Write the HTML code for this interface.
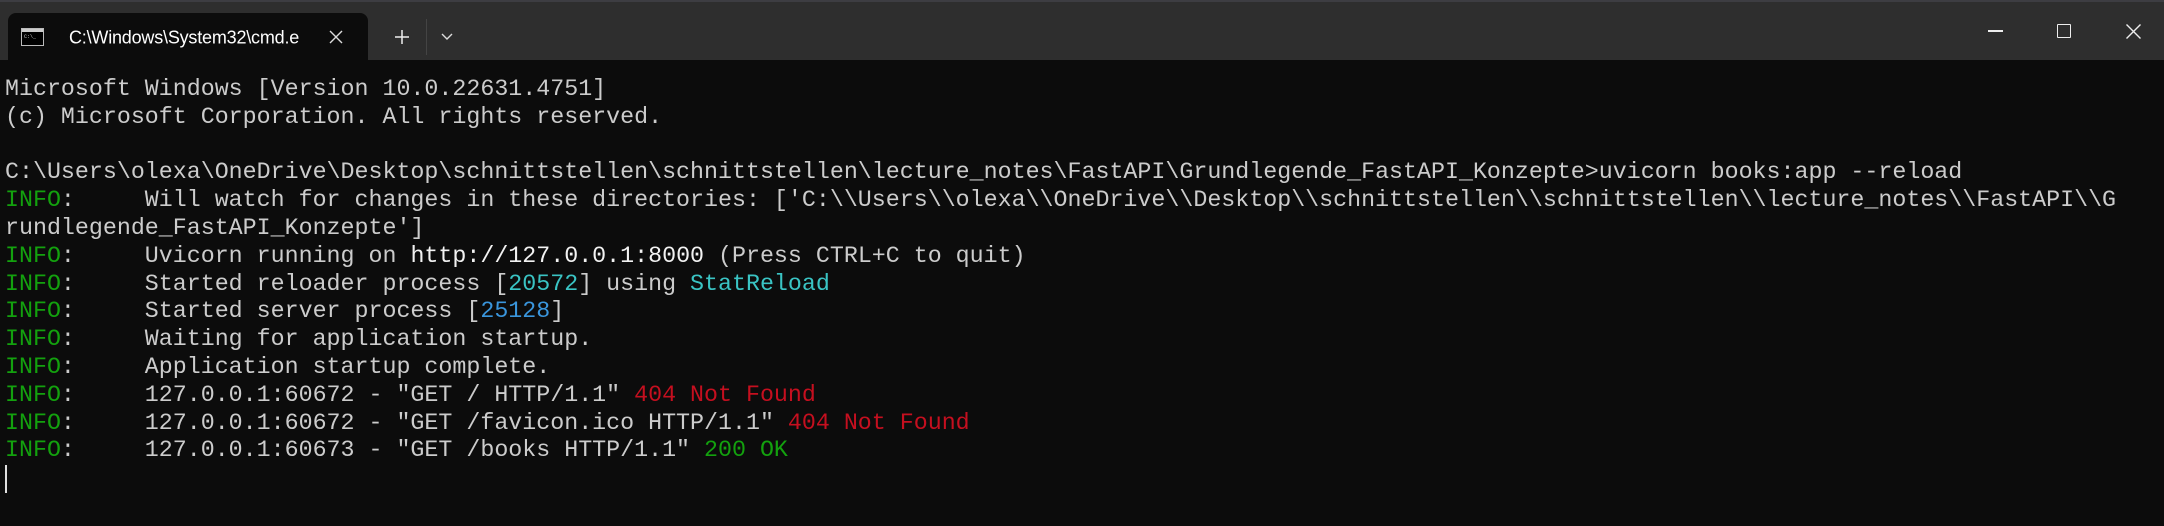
<!DOCTYPE html>
<html><head><meta charset="utf-8"><style>
html,body{margin:0;padding:0;width:2164px;height:526px;overflow:hidden;background:#0c0c0c}
.bar{position:absolute;left:0;top:0;width:2164px;height:60px;background:#2e2e2e}
.top{position:absolute;left:0;top:0;width:2164px;height:2px;background:#3d3d42}
.tab{position:absolute;left:8px;top:13px;width:360px;height:48px;background:#0c0c0c;border-radius:8px 8px 0 0}
.ttl{position:absolute;left:61px;top:38px;transform:translateY(-50%);font:18px "Liberation Sans",sans-serif;color:#fff;white-space:nowrap;letter-spacing:-0.2px}
.term{position:absolute;left:5px;top:76px;font-family:"Liberation Mono",monospace;font-size:23.3px;line-height:27.8px;color:#cccccc;white-space:pre}
.g{color:#13a10e}.r{color:#c50f1f}.c{color:#3ac4c4}.b{color:#3a96dd}.w{color:#f2f2f2}
.cur{position:absolute;left:5px;top:465px;width:2px;height:28px;background:#e0e0e0}
</style></head><body>
<div class="bar"></div><div class="top"></div>
<div class="tab">
<svg style="position:absolute;left:13px;top:15px" width="23" height="18" viewBox="0 0 23 18"><rect x="0.5" y="0.5" width="22" height="17" fill="#000" stroke="#bbb"/><rect x="1" y="1" width="21" height="3" fill="#ccc"/><text x="3" y="10" font-size="5" fill="#ccc" font-family="Liberation Mono">C:\_</text></svg>
<div class="ttl" style="top:25px">C:\Windows\System32\cmd.e</div>
<svg style="position:absolute;left:321px;top:17px" width="14" height="14" viewBox="0 0 14 14"><path d="M1 1L13 13M13 1L1 13" stroke="#ddd" stroke-width="1.4"/></svg>
</div>
<svg style="position:absolute;left:394px;top:29px" width="16" height="16" viewBox="0 0 16 16"><path d="M8 1V15M1 8H15" stroke="#eee" stroke-width="1.5"/></svg>
<div style="position:absolute;left:426px;top:19px;width:1px;height:36px;background:#444"></div>
<svg style="position:absolute;left:441px;top:33px" width="12" height="8" viewBox="0 0 12 8"><path d="M1 1L6 6L11 1" stroke="#ddd" stroke-width="1.4" fill="none"/></svg>
<div style="position:absolute;left:1988px;top:30px;width:15px;height:2px;background:#eee"></div>
<div style="position:absolute;left:2057px;top:24px;width:12px;height:12px;border:1.5px solid #eee;border-radius:1px"></div>
<svg style="position:absolute;left:2126px;top:24px" width="15" height="15" viewBox="0 0 15 15"><path d="M0.5 0.5L14.5 14.5M14.5 0.5L0.5 14.5" stroke="#eee" stroke-width="1.4"/></svg>
<div class="term">Microsoft Windows [Version 10.0.22631.4751]
(c) Microsoft Corporation. All rights reserved.

C:\Users\olexa\OneDrive\Desktop\schnittstellen\schnittstellen\lecture_notes\FastAPI\Grundlegende_FastAPI_Konzepte>uvicorn books:app --reload
<span class="g">INFO</span>:     Will watch for changes in these directories: ['C:\\Users\\olexa\\OneDrive\\Desktop\\schnittstellen\\schnittstellen\\lecture_notes\\FastAPI\\G
rundlegende_FastAPI_Konzepte']
<span class="g">INFO</span>:     Uvicorn running on <span class="w">http://127.0.0.1:8000</span> (Press CTRL+C to quit)
<span class="g">INFO</span>:     Started reloader process [<span class="c">20572</span>] using <span class="c">StatReload</span>
<span class="g">INFO</span>:     Started server process [<span class="b">25128</span>]
<span class="g">INFO</span>:     Waiting for application startup.
<span class="g">INFO</span>:     Application startup complete.
<span class="g">INFO</span>:     127.0.0.1:60672 - "GET / HTTP/1.1" <span class="r">404 Not Found</span>
<span class="g">INFO</span>:     127.0.0.1:60672 - "GET /favicon.ico HTTP/1.1" <span class="r">404 Not Found</span>
<span class="g">INFO</span>:     127.0.0.1:60673 - "GET /books HTTP/1.1" <span class="g">200 OK</span></div>
<div class="cur"></div>
</body></html>
